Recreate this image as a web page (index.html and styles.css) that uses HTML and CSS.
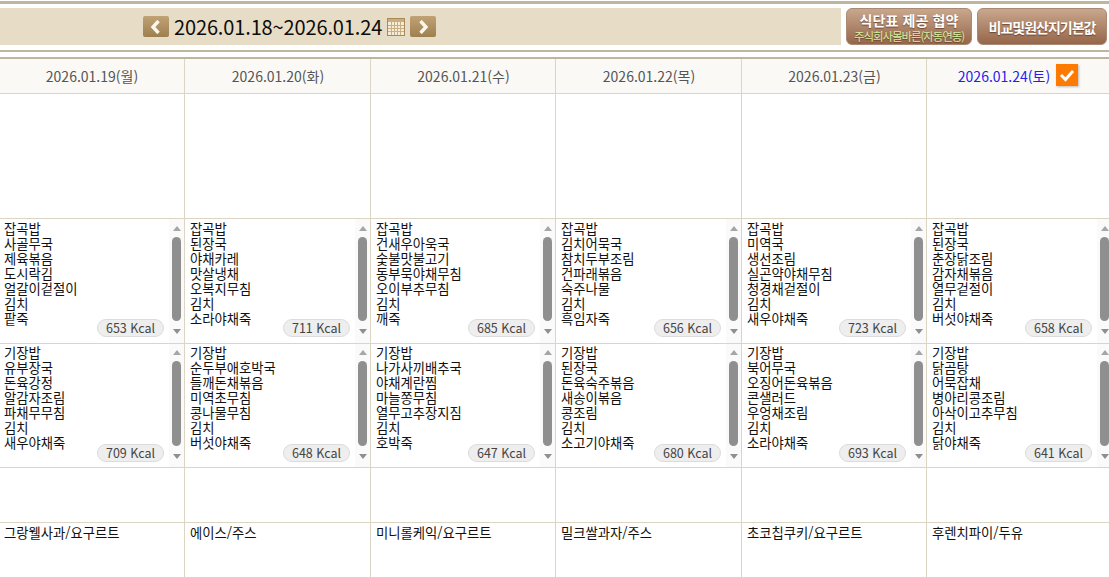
FILE: index.html
```html
<!DOCTYPE html>
<html lang="ko">
<head>
<meta charset="utf-8">
<title>식단표</title>
<link rel="stylesheet" href="styles.css">
</head>
<body>
<div class="rule-top"></div>
<header class="toolbar">
  <div class="week">
    <button class="nav"><svg width="12" height="14" viewBox="0 0 12 14"><path d="M8.5 1 3 7l5.5 6" fill="none" stroke="#fbf7ec" stroke-width="3.4"/></svg></button>
    <span class="range">2026.01.18~2026.01.24</span>
    <svg class="cal" width="18" height="18" viewBox="0 0 18 18"><rect x=".5" y=".5" width="17" height="17" fill="#f4ecd9" stroke="#a98a58"/><rect x="1" y="1" width="16" height="3" fill="#c9ae7f"/><path d="M1 7.5h16M1 10.5h16M1 13.5h16M4.5 4v13M7.5 4v13M10.5 4v13M13.5 4v13" stroke="#c9ae7f" fill="none"/></svg>
    <button class="nav"><svg width="12" height="14" viewBox="0 0 12 14"><path d="M3.5 1 9 7l-5.5 6" fill="none" stroke="#fbf7ec" stroke-width="3.4"/></svg></button>
  </div>
  <div class="actions">
    <button class="action action-a"><span class="action-main">식단표 제공 협약</span><span class="action-sub">주식회사몰바른(자동연동)</span></button>
    <button class="action action-b"><span class="action-tight">비교및원산지기본값</span></button>
  </div>
</header>
<div class="rule-mid"></div>
<main class="table">
  <div class="row row-head">
    <div class="cell head">2026.01.19(월)</div>
    <div class="cell head">2026.01.20(화)</div>
    <div class="cell head">2026.01.21(수)</div>
    <div class="cell head">2026.01.22(목)</div>
    <div class="cell head">2026.01.23(금)</div>
    <div class="cell head sat">2026.01.24(토)<span class="check"><svg width="16" height="14" viewBox="0 0 16 14"><path d="M2 7l4.5 4.5L14 3" fill="none" stroke="#fff" stroke-width="3"/></svg></span></div>
  </div>
  <div class="row row-blank">
    <div class="cell"></div><div class="cell"></div><div class="cell"></div><div class="cell"></div><div class="cell"></div><div class="cell"></div>
  </div>
  <div class="row row-lunch">
    <div class="cell menu"><ul class="items"><li>잡곡밥</li><li>사골무국</li><li>제육볶음</li><li>도시락김</li><li>얼갈이겉절이</li><li>김치</li><li>팥죽</li></ul><div class="bar"><i class="up"></i><i class="thumb"></i><i class="down"></i></div><span class="kcal">653 Kcal</span></div>
    <div class="cell menu"><ul class="items"><li>잡곡밥</li><li>된장국</li><li>야채카레</li><li>맛살냉채</li><li>오복지무침</li><li>김치</li><li>소라야채죽</li></ul><div class="bar"><i class="up"></i><i class="thumb"></i><i class="down"></i></div><span class="kcal">711 Kcal</span></div>
    <div class="cell menu"><ul class="items"><li>잡곡밥</li><li>건새우아욱국</li><li>숯불맛불고기</li><li>동부묵야채무침</li><li>오이부추무침</li><li>김치</li><li>깨죽</li></ul><div class="bar"><i class="up"></i><i class="thumb"></i><i class="down"></i></div><span class="kcal">685 Kcal</span></div>
    <div class="cell menu"><ul class="items"><li>잡곡밥</li><li>김치어묵국</li><li>참치두부조림</li><li>건파래볶음</li><li>숙주나물</li><li>김치</li><li>흑임자죽</li></ul><div class="bar"><i class="up"></i><i class="thumb"></i><i class="down"></i></div><span class="kcal">656 Kcal</span></div>
    <div class="cell menu"><ul class="items"><li>잡곡밥</li><li>미역국</li><li>생선조림</li><li>실곤약야채무침</li><li>청경채겉절이</li><li>김치</li><li>새우야채죽</li></ul><div class="bar"><i class="up"></i><i class="thumb"></i><i class="down"></i></div><span class="kcal">723 Kcal</span></div>
    <div class="cell menu"><ul class="items"><li>잡곡밥</li><li>된장국</li><li>춘장닭조림</li><li>감자채볶음</li><li>열무겉절이</li><li>김치</li><li>버섯야채죽</li></ul><div class="bar"><i class="up"></i><i class="thumb"></i><i class="down"></i></div><span class="kcal">658 Kcal</span></div>
  </div>
  <div class="row row-dinner">
    <div class="cell menu"><ul class="items"><li>기장밥</li><li>유부장국</li><li>돈육강정</li><li>알감자조림</li><li>파채무무침</li><li>김치</li><li>새우야채죽</li></ul><div class="bar"><i class="up"></i><i class="thumb"></i><i class="down"></i></div><span class="kcal">709 Kcal</span></div>
    <div class="cell menu"><ul class="items"><li>기장밥</li><li>순두부애호박국</li><li>들깨돈채볶음</li><li>미역초무침</li><li>콩나물무침</li><li>김치</li><li>버섯야채죽</li></ul><div class="bar"><i class="up"></i><i class="thumb"></i><i class="down"></i></div><span class="kcal">648 Kcal</span></div>
    <div class="cell menu"><ul class="items"><li>기장밥</li><li>나가사끼배추국</li><li>야채계란찜</li><li>마늘쫑무침</li><li>열무고추장지짐</li><li>김치</li><li>호박죽</li></ul><div class="bar"><i class="up"></i><i class="thumb"></i><i class="down"></i></div><span class="kcal">647 Kcal</span></div>
    <div class="cell menu"><ul class="items"><li>기장밥</li><li>된장국</li><li>돈육숙주볶음</li><li>새송이볶음</li><li>콩조림</li><li>김치</li><li>소고기야채죽</li></ul><div class="bar"><i class="up"></i><i class="thumb"></i><i class="down"></i></div><span class="kcal">680 Kcal</span></div>
    <div class="cell menu"><ul class="items"><li>기장밥</li><li>북어무국</li><li>오징어돈육볶음</li><li>콘샐러드</li><li>우엉채조림</li><li>김치</li><li>소라야채죽</li></ul><div class="bar"><i class="up"></i><i class="thumb"></i><i class="down"></i></div><span class="kcal">693 Kcal</span></div>
    <div class="cell menu"><ul class="items"><li>기장밥</li><li>닭곰탕</li><li>어묵잡채</li><li>병아리콩조림</li><li>아삭이고추무침</li><li>김치</li><li>닭야채죽</li></ul><div class="bar"><i class="up"></i><i class="thumb"></i><i class="down"></i></div><span class="kcal">641 Kcal</span></div>
  </div>
  <div class="row row-gap">
    <div class="cell"></div><div class="cell"></div><div class="cell"></div><div class="cell"></div><div class="cell"></div><div class="cell"></div>
  </div>
  <div class="row row-snack">
    <div class="cell snack">그랑웰사과/요구르트</div>
    <div class="cell snack">에이스/주스</div>
    <div class="cell snack">미니롤케익/요구르트</div>
    <div class="cell snack">밀크쌀과자/주스</div>
    <div class="cell snack">초코칩쿠키/요구르트</div>
    <div class="cell snack">후렌치파이/두유</div>
  </div>
</main>
</body>
</html>
```
FILE: styles.css
```css
* { box-sizing: border-box; }
html, body { margin: 0; padding: 0; height: 578px; overflow: hidden; background: #fff; }
body { font-family: "Noto Sans CJK KR", "Noto Sans", sans-serif; color: #111; font-size: 13.33px; }
button { font-family: inherit; border: 0; padding: 0; cursor: pointer; }

.rule-top { height: 3px; margin-top: 1px; background: #bfb59c; }
.toolbar {
  height: 37px; margin-top: 4px; background: #e7dcc5;
  display: flex; align-items: center; justify-content: space-between;
}
.week { display: flex; align-items: center; padding-left: 143px; }
.nav {
  width: 26px; height: 21px; border-radius: 2px;
  background: linear-gradient(#bfa275, #9f7f50);
  display: flex; align-items: center; justify-content: center;
}
.range { margin: 0 5px; font-size: 20px; line-height: 24px; width: 208px; letter-spacing: -.14px; white-space: nowrap; color: #0c0c0c; }
.cal { margin-right: 5px; }
.actions { display: flex; gap: 5px; padding-right: 2px; background: #fff; height: 37px; padding-left: 5px; }
.action {
  height: 37px; border-radius: 6px; color: #fff;
  border: 1px solid #a98a72;
  background: linear-gradient(#c9a78d, #95664a);
  display: flex; flex-direction: column; align-items: center; justify-content: center;
  text-shadow: 0 1px 1px rgba(70, 35, 15, .6);
}
.action-a { width: 126px; }
.action-b { width: 130px; }
.action-main { font-size: 14px; font-weight: 700; line-height: 18px; letter-spacing: .1px; }
.action-sub { font-size: 11.5px; line-height: 14px; letter-spacing: -1.1px; color: #d6eea0; }
.action-tight { font-size: 14px; font-weight: 700; letter-spacing: -1px; line-height: 18px; }

.rule-mid { height: 2px; margin-top: 5px; background: #bfb59c; }

.table { margin-top: 5px; border-top: 2px solid #bfb59c; margin-left: -2px; width: 1114px; }
.row { display: grid; grid-template-columns: 186px 186px 185px 186px 185px 186px; border-bottom: 1px solid #ddd5c3; }
.row-head { height: 35px; background: #faf9f5; }
.row-blank { height: 125px; }
.row-lunch { height: 125px; }
.row-dinner { height: 124px; }
.row-gap { height: 55px; }
.row-snack { height: 55px; }
.cell { border-left: 1px solid #ddd5c3; position: relative; min-width: 0; }

.head { display: flex; align-items: center; justify-content: center; font-size: 14px; color: #555; padding-bottom: 1px; padding-left: 1px; }
.sat { color: #2222ee; padding-left: 0; padding-right: 31px; }
.check {
  position: absolute; left: 129px; top: 5px; width: 22px; height: 22px; background: #ff7a00;
  display: flex; align-items: center; justify-content: center;
  box-shadow: 1px 1px 2px rgba(0,0,0,.25);
}

.menu { display: flex; }
.items { list-style: none; margin: 0; padding: 2px 0 0 5px; flex: 1; font-size: 13.33px; line-height: 15px; color: #111; }
.row-dinner .items { padding-top: 1px; }
.items li { white-space: nowrap; height: 15px; }

.bar { width: 15px; background: #fafafa; display: flex; flex-direction: column; align-items: center; padding-top: 7px; }
.row-dinner .bar { padding-top: 6px; }
.bar i { display: block; }
.up { width: 0; height: 0; border: 4px solid transparent; border-top: 0; border-bottom: 5px solid #a6a6a6; }
.thumb { width: 9px; height: 84px; margin: 6px 0 8px; border-radius: 5px; background: #8f8f8f; }
.row-dinner .thumb { height: 85px; }
.down { width: 0; height: 0; border: 4px solid transparent; border-bottom: 0; border-top: 5px solid #8f8f8f; }
.kcal {
  position: absolute; right: 20px; top: 100px; width: 67px; height: 18px; border-radius: 9px;
  background: #eeeeee; border: 1px solid #dcdcdc; color: #444; font-size: 12.5px; line-height: 15px;
  text-align: center; white-space: nowrap;
}

.snack { padding: 1px 0 0 5px; font-size: 13.33px; line-height: 18px; color: #111; white-space: nowrap; }
```
